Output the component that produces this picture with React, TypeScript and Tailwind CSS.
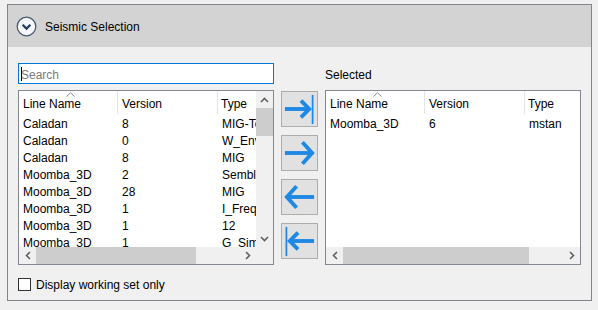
import React from "react";

const FONT = { fontFamily: '"Liberation Sans", Arial, sans-serif' };

type Row = [string, string, string];

function ChevUp() {
  return (
    <svg width="9" height="6" viewBox="0 0 9 6">
      <path d="M1 5 L4.5 1.5 L8 5" fill="none" stroke="#606060" strokeWidth="1.6" />
    </svg>
  );
}
function ChevDown() {
  return (
    <svg width="9" height="6" viewBox="0 0 9 6">
      <path d="M1 1 L4.5 4.5 L8 1" fill="none" stroke="#606060" strokeWidth="1.6" />
    </svg>
  );
}
function ChevLeft() {
  return (
    <svg width="6" height="9" viewBox="0 0 6 9">
      <path d="M5 1 L1.5 4.5 L5 8" fill="none" stroke="#606060" strokeWidth="1.6" />
    </svg>
  );
}
function ChevRight() {
  return (
    <svg width="6" height="9" viewBox="0 0 6 9">
      <path d="M1 1 L4.5 4.5 L1 8" fill="none" stroke="#606060" strokeWidth="1.6" />
    </svg>
  );
}

function SortArrow() {
  return (
    <svg width="9" height="5" viewBox="0 0 9 5" className="absolute top-[1px] left-[47px]">
      <path d="M0.5 4.5 L4.5 0.8 L8.5 4.5" fill="none" stroke="#8a8a8a" strokeWidth="1" />
    </svg>
  );
}

function ListView({
  rows,
  vscroll,
  hThumbLeft,
  hThumbWidth,
}: {
  rows: Row[];
  vscroll: boolean;
  hThumbLeft: number;
  hThumbWidth: number;
}) {
  return (
    <div className="w-[256px] h-[175px] border border-[#828790] bg-white flex flex-col">
      <div className="flex flex-1 min-h-0">
        <div className="flex-1 min-w-0 overflow-hidden">
          <div className="relative flex h-[23px] items-center text-[12px] text-black">
            <SortArrow />
            <div className="w-[99px] shrink-0 pl-[4px] pt-[2px] h-full flex items-center border-r border-[#e5e5e5]">Line Name</div>
            <div className="w-[100px] shrink-0 pl-[4px] pt-[2px] h-full flex items-center border-r border-[#e5e5e5]">Version</div>
            <div className="w-[100px] shrink-0 pl-[3px] pt-[2px] h-full flex items-center whitespace-nowrap">Type</div>
          </div>
          {rows.map((r, i) => (
            <div key={i} className="flex h-[17px] pt-[2px] items-center text-[12px] text-black whitespace-nowrap">
              <div className="w-[99px] shrink-0 pl-[4px]">{r[0]}</div>
              <div className="w-[100px] shrink-0 pl-[4px]">{r[1]}</div>
              <div className="w-[100px] shrink-0 pl-[4px]">{r[2]}</div>
            </div>
          ))}
        </div>
        {vscroll && (
          <div className="w-[17px] shrink-0 bg-[#f0f0f0] flex flex-col">
            <div className="h-[17px] flex items-center justify-center">
              <ChevUp />
            </div>
            <div className="h-[28px] bg-[#cdcdcd]" />
            <div className="flex-1" />
            <div className="h-[17px] flex items-center justify-center">
              <ChevDown />
            </div>
          </div>
        )}
      </div>
      <div className="h-[17px] shrink-0 flex bg-[#f0f0f0]">
        <div className="flex-1 relative">
          <div className="absolute left-0 top-0 w-[17px] h-full flex items-center justify-center">
            <ChevLeft />
          </div>
          <div
            className="absolute top-0 h-full bg-[#cdcdcd]"
            style={{ left: hThumbLeft, width: hThumbWidth }}
          />
          <div className="absolute right-0 top-0 w-[17px] h-full flex items-center justify-center">
            <ChevRight />
          </div>
        </div>
        {vscroll && <div className="w-[17px] shrink-0 bg-[#f0f0f0]" />}
      </div>
    </div>
  );
}

function ArrowBtn({ kind }: { kind: "allRight" | "right" | "left" | "allLeft" }) {
  const blue = "#1e88e5";
  let content: React.ReactNode = null;
  if (kind === "allRight") {
    content = (
      <>
        <path d="M3 17.5 H28" stroke={blue} strokeWidth="4" />
        <path d="M19.5 9 L28 17.5 L19.5 26" fill="none" stroke={blue} strokeWidth="4" />
        <path d="M31.5 3 V33" stroke={blue} strokeWidth="1.8" />
      </>
    );
  } else if (kind === "right") {
    content = (
      <>
        <path d="M3 17.5 H31" stroke={blue} strokeWidth="4" />
        <path d="M21 6.5 L31 17.5 L21 28.5" fill="none" stroke={blue} strokeWidth="4" />
      </>
    );
  } else if (kind === "left") {
    content = (
      <>
        <path d="M5 17.5 H33" stroke={blue} strokeWidth="4" />
        <path d="M15 6.5 L5 17.5 L15 28.5" fill="none" stroke={blue} strokeWidth="4" />
      </>
    );
  } else {
    content = (
      <>
        <path d="M8 17.5 H33" stroke={blue} strokeWidth="4" />
        <path d="M16.5 9 L8 17.5 L16.5 26" fill="none" stroke={blue} strokeWidth="4" />
        <path d="M4.5 3 V33" stroke={blue} strokeWidth="1.8" />
      </>
    );
  }
  return (
    <div className="w-[37px] h-[36px] bg-[#e1e1e1] border border-[#adadad]">
      <svg width="35" height="34" viewBox="0 0 36 35">
        {content}
      </svg>
    </div>
  );
}

const leftRows: Row[] = [
  ["Caladan", "8", "MIG-Te"],
  ["Caladan", "0", "W_Env"],
  ["Caladan", "8", "MIG"],
  ["Moomba_3D", "2", "Sembl"],
  ["Moomba_3D", "28", "MIG"],
  ["Moomba_3D", "1", "I_Frequ"],
  ["Moomba_3D", "1", "12"],
  ["Moomba_3D", "1", "G_Sim"],
];

export default function App() {
  return (
    <div className="w-[598px] h-[310px] bg-[#f0f0f0] pt-[4px] pl-[7px] pr-[6px] pb-[9px]" style={FONT}>
      <div className="h-full border border-[#80858c] flex flex-col">
        <div className="h-[42px] shrink-0 bg-[#d3d3d3] flex items-center pl-[8px]">
          <svg width="21" height="21" viewBox="0 0 21 21">
            <circle cx="10.5" cy="10.5" r="9.3" fill="#f5f7fa" stroke="#4b5b6f" strokeWidth="1.3" />
            <path d="M6.6 8.8 L10.5 12.6 L14.4 8.8" fill="none" stroke="#1f3b63" strokeWidth="2.2" />
          </svg>
          <span className="ml-[8px] pt-[2px] text-[12px] text-black">Seismic Selection</span>
        </div>
        <div className="flex-1 pl-[10px] pt-[16px]">
          <div className="flex">
            <div className="w-[256px] shrink-0 flex flex-col">
              <div className="h-[21px] border border-[#0078d7] bg-white flex items-center pl-[2px] relative">
                <div className="w-[1px] h-[14px] bg-black" />
                <span className="ml-[-1px] pt-[2px] text-[12px] text-[#7a7a7a]">Search</span>
              </div>
              <div className="mt-[6px]">
                <ListView rows={leftRows} vscroll hThumbLeft={17} hThumbWidth={160} />
              </div>
            </div>
            <div className="ml-[7px] pt-[28px] flex flex-col gap-[8px]">
              <ArrowBtn kind="allRight" />
              <ArrowBtn kind="right" />
              <ArrowBtn kind="left" />
              <ArrowBtn kind="allLeft" />
            </div>
            <div className="ml-[7px] w-[256px] shrink-0 flex flex-col">
              <div className="h-[21px] pt-[2px] flex items-center text-[12px] text-black">Selected</div>
              <div className="mt-[6px]">
                <ListView rows={[["Moomba_3D", "6", "mstan"]]} vscroll={false} hThumbLeft={17} hThumbWidth={186} />
              </div>
            </div>
          </div>
          <div className="mt-[10px] flex items-center">
            <div className="w-[13px] h-[13px] border border-[#333333] bg-white" />
            <span className="ml-[5px] pt-[1px] text-[12px] text-black">Display working set only</span>
          </div>
        </div>
      </div>
    </div>
  );
}
